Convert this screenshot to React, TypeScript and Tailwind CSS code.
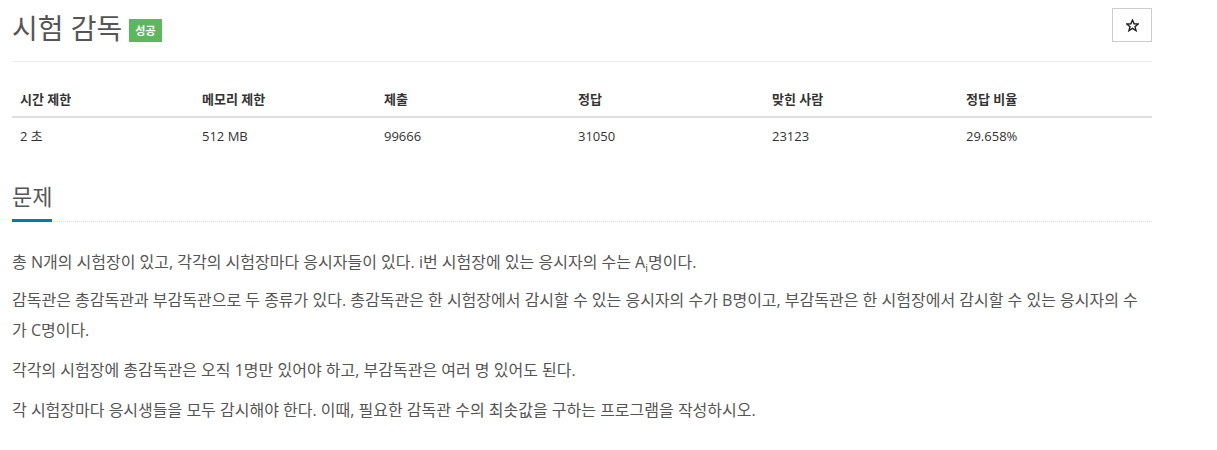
import React from "react";

const font = { fontFamily: '"Open Sans", "Noto Sans CJK KR", sans-serif' };

export default function App() {
  const heads = ["시간 제한", "메모리 제한", "제출", "정답", "맞힌 사람", "정답 비율"];
  const vals = ["2 초", "512 MB", "99666", "31050", "23123", "29.658%"];
  const widths = ["w-[182px]", "w-[182px]", "w-[194px]", "w-[194px]", "w-[194px]", "w-[194px]"];
  return (
    <div className="bg-white min-h-[450px] text-[#333]" style={font}>
      <div className="w-[1140px] ml-[12px]">
        <div className="flex items-start justify-between pt-[8px] pb-[15px] border-b border-[#eee]">
          <div className="flex items-end gap-[7px] pt-[2px]">
            <h1 className="text-[28px] leading-[36px] text-[#555] font-normal">시험 감독</h1>
            <span className="mb-[4px] bg-[#5cb85c] text-white text-[11px] font-bold leading-[23px] px-[6px]">성공</span>
          </div>
          <button className="w-[40px] h-[34px] border border-[#ccc] bg-white flex items-center justify-center">
            <svg width="13" height="13" viewBox="0 0 24 24" fill="none" stroke="#222" strokeWidth="2.6" strokeLinejoin="miter">
              <polygon points="12,2 14.9,9 22.5,9.3 16.6,14.1 18.6,21.5 12,17.3 5.4,21.5 7.4,14.1 1.5,9.3 9.1,9" />
            </svg>
          </button>
        </div>
        <div className="mt-[20px]">
          <div className="flex border-b-2 border-[#ddd]">
            {heads.map((h, i) => (
              <div key={h} className={`${widths[i]} px-[8px] py-[8px] text-[13px] font-bold leading-[18px]`}>{h}</div>
            ))}
          </div>
          <div className="flex">
            {vals.map((v, i) => (
              <div key={v} className={`${widths[i]} px-[8px] py-[8px] text-[13px] leading-[20px]`}>{v}</div>
            ))}
          </div>
        </div>
        <div className="mt-[27px] border-b border-dotted border-[#ddd] flex">
          <h2 className="text-[22px] leading-[30px] text-[#555] pb-[8px] border-b-[3px] border-[#0076c0] -mb-px">문제</h2>
        </div>
        <div className="mt-[25px] text-[16px] leading-[30px] text-[#555]">
          <p className="mb-[8px]">
            총 N개의 시험장이 있고, 각각의 시험장마다 응시자들이 있다. i번 시험장에 있는 응시자의 수는 A<sub className="text-[11px] leading-none align-baseline relative top-[4px]">i</sub>명이다.
          </p>
          <p className="mb-[10px]">
            감독관은 총감독관과 부감독관으로 두 종류가 있다. 총감독관은 한 시험장에서 감시할 수 있는 응시자의 수가 B명이고, 부감독관은 한 시험장에서 감시할 수 있는 응시자의 수가 C명이다.
          </p>
          <p className="mb-[10px]">
            각각의 시험장에 총감독관은 오직 1명만 있어야 하고, 부감독관은 여러 명 있어도 된다.
          </p>
          <p className="mb-[10px]">
            각 시험장마다 응시생들을 모두 감시해야 한다. 이때, 필요한 감독관 수의 최솟값을 구하는 프로그램을 작성하시오.
          </p>
        </div>
      </div>
    </div>
  );
}
